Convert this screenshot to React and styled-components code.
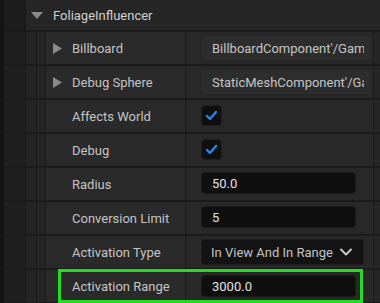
import React from "react";
import styled, { createGlobalStyle } from "styled-components";

const Global = createGlobalStyle`
  html, body { margin: 0; padding: 0; background: #161616; }
  body { font-family: Roboto, "Noto Sans", "Liberation Sans", sans-serif; }
`;

const Panel = styled.div`
  position: relative;
  width: 380px;
  height: 303px;
  display: flex;
  background: #161616;
  overflow: hidden;
`;

const Gutter = styled.div`
  width: 4px;
  flex: none;
  background: #141414;
`;

const Main = styled.div`
  flex: 1;
  display: flex;
  flex-direction: column;
`;

const HeaderRow = styled.div`
  height: 30px;
  flex: none;
  display: flex;
  border-bottom: 2px solid #1b1b1b;
`;

const HeaderIndent = styled.div`
  width: 21px;
  flex: none;
  background: #1d1d1d;
  border-right: 1px solid #171717;
`;

const HeaderContent = styled.div`
  flex: 1;
  display: flex;
  align-items: center;
  gap: 10px;
  padding-left: 5px;
  background: #262626;
  color: #d0d0d0;
  font-size: 13px;
`;

const Row = styled.div`
  height: 32px;
  flex: none;
  display: flex;
  border-bottom: 2px solid #1b1b1b;
`;

const Stripe = styled.div`
  width: ${(p) => p.$w}px;
  flex: none;
  background: ${(p) => p.$bg};
  border-right: 1px solid #1a1a1a;
`;

const NameCell = styled.div`
  width: 140px;
  flex: none;
  display: flex;
  align-items: center;
  padding-left: ${(p) => (p.$expander ? 7 : 26)}px;
  gap: 10px;
  box-sizing: border-box;
  background: #2a2a2a;
  border-right: 1px solid #1b1b1b;
  color: #c4c4c4;
  font-size: 13px;
  white-space: nowrap;
`;

const ValueCell = styled.div`
  width: 188px;
  flex: none;
  display: flex;
  align-items: center;
  padding-left: 15px;
  box-sizing: border-box;
  background: #282828;
  border-right: 1px solid #1b1b1b;
`;

const Tail = styled.div`
  flex: 1;
  background: #262626;
`;

const ObjectBox = styled.div`
  width: 171px;
  height: 26px;
  flex: none;
  box-sizing: border-box;
  display: flex;
  align-items: center;
  padding: 0 7px 0 10px;
  background: #2d2d2d;
  border: 1px solid #262626;
  border-radius: 4px;
`;

const ObjectText = styled.span`
  flex: 1;
  min-width: 0;
  overflow: hidden;
  white-space: nowrap;
  color: #c4c4c4;
  font-size: 13px;
`;

const NumberInput = styled.div`
  width: 155px;
  height: 22px;
  flex: none;
  box-sizing: border-box;
  display: flex;
  align-items: center;
  padding-left: 10px;
  background: #0f0f0f;
  border: 1px solid #1a1a1a;
  border-radius: 4px;
  color: #e2e2e2;
  font-size: 13px;
  margin-top: ${(p) => p.$shift || 0}px;
`;

const Dropdown = styled.div`
  width: 163px;
  height: 26px;
  flex: none;
  box-sizing: border-box;
  display: flex;
  align-items: center;
  gap: 7px;
  padding-left: 9px;
  background: #131313;
  border: 1px solid #1c1c1c;
  border-radius: 4px;
  color: #c4c4c4;
  font-size: 13px;
  white-space: nowrap;
`;

const CheckBox = styled.div`
  width: 21px;
  height: 21px;
  flex: none;
  box-sizing: border-box;
  display: flex;
  align-items: center;
  justify-content: center;
  background: #0f0f0f;
  border: 1px solid #1f1f1f;
  border-radius: 4px;
  margin-top: -2px;
`;

const Highlight = styled.div`
  position: absolute;
  left: 58px;
  top: 269px;
  width: 305px;
  height: 34px;
  box-sizing: border-box;
  border: 3px solid #22dd22;
  pointer-events: none;
`;

const TriRight = () => (
  <svg width="9" height="11" viewBox="0 0 9 11">
    <path d="M0 0 L9 5.5 L0 11 Z" fill="#8a8a8a" />
  </svg>
);

const TriDown = () => (
  <svg width="12" height="7" viewBox="0 0 12 7">
    <path d="M0 0 L12 0 L6 7 Z" fill="#8a8a8a" />
  </svg>
);

const Check = () => (
  <svg width="13" height="11" viewBox="0 0 13 11">
    <path d="M2 6 L5 9 L11 2" fill="none" stroke="#2a86e4" strokeWidth="2.4" strokeLinecap="round" strokeLinejoin="round" />
  </svg>
);

const Chevron = () => (
  <svg width="12" height="8" viewBox="0 0 12 8">
    <path d="M1 1.5 L6 6.5 L11 1.5" fill="none" stroke="#cfcfcf" strokeWidth="1.8" strokeLinecap="round" strokeLinejoin="round" />
  </svg>
);

const Indent = () => (
  <>
    <Stripe $w={21} $bg="#1f1f1f" />
    <Stripe $w={10} $bg="#242424" />
    <Stripe $w={8} $bg="#252525" />
  </>
);

const Prop = ({ name, expander, children }) => (
  <Row>
    <Indent />
    <NameCell $expander={expander}>
      {expander && <TriRight />}
      <span>{name}</span>
    </NameCell>
    <ValueCell>{children}</ValueCell>
    <Tail />
  </Row>
);

export default function App() {
  return (
    <>
      <Global />
      <Panel>
        <Gutter />
        <Main>
          <HeaderRow>
            <HeaderIndent />
            <HeaderContent>
              <TriDown />
              <span>FoliageInfluencer</span>
            </HeaderContent>
          </HeaderRow>
          <Prop name="Billboard" expander>
            <ObjectBox>
              <ObjectText>BillboardComponent'/Game/Foliage</ObjectText>
            </ObjectBox>
          </Prop>
          <Prop name="Debug Sphere" expander>
            <ObjectBox>
              <ObjectText>StaticMeshComponent'/Game/Foliage</ObjectText>
            </ObjectBox>
          </Prop>
          <Prop name="Affects World">
            <CheckBox>
              <Check />
            </CheckBox>
          </Prop>
          <Prop name="Debug">
            <CheckBox>
              <Check />
            </CheckBox>
          </Prop>
          <Prop name="Radius">
            <NumberInput $shift={-2}>50.0</NumberInput>
          </Prop>
          <Prop name="Conversion Limit">
            <NumberInput $shift={-2}>5</NumberInput>
          </Prop>
          <Prop name="Activation Type">
            <Dropdown>
              <span>In View And In Range</span>
              <Chevron />
            </Dropdown>
          </Prop>
          <Prop name="Activation Range">
            <NumberInput $shift={0}>3000.0</NumberInput>
          </Prop>
        </Main>
        <Highlight />
      </Panel>
    </>
  );
}
